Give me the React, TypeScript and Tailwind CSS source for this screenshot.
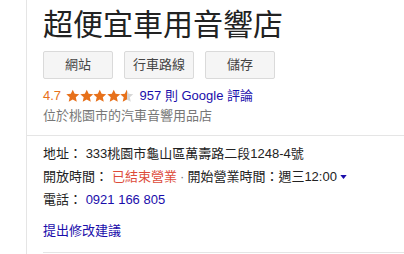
import React from "react";

const font = { fontFamily: '"Liberation Sans", Arial, "Noto Sans CJK TC", sans-serif' };

function Star({ fill }: { fill: "full" | "half" }) {
  return (
    <svg viewBox="0 0 24 24" className="h-[14px] w-[13.5px]">
      <defs>
        <linearGradient id="half">
          <stop offset="50%" stopColor="#e7711b" />
          <stop offset="50%" stopColor="#d6d6d6" />
        </linearGradient>
      </defs>
      <path
        d="M12 .8l3.4 7.4 8.1.8-6.1 5.4 1.8 8L12 18.3l-7.2 4.1 1.8-8L.5 9l8.1-.8z"
        fill={fill === "full" ? "#e7711b" : "url(#half)"}
      />
    </svg>
  );
}

export default function App() {
  const buttons = ["網站", "行車路線", "儲存"];

  return (
    <div className="h-[254px] w-[404px] overflow-hidden bg-white pl-[26px]" style={font}>
      <div className="h-full border-l border-[#e5e5e5]">
        <div className="pl-[16px]">
          <h1 className="pt-[7px] text-[30px] leading-[36px] text-[#222]">超便宜車用音響店</h1>

          <div className="mt-[8px] flex gap-[11px]">
            {buttons.map((b) => (
              <div
                key={b}
                className="flex h-[28px] w-[70px] items-center justify-center rounded-[2px] border border-[#dadada] bg-[#f5f5f5] text-[13px] text-[#444]"
              >
                {b}
              </div>
            ))}
          </div>

          <div className="mt-[8px] flex h-[18px] items-center text-[13px]">
            <span className="text-[#e7711b]">4.7</span>
            <span className="ml-[5px] flex">
              <Star fill="full" />
              <Star fill="full" />
              <Star fill="full" />
              <Star fill="full" />
              <Star fill="half" />
            </span>
            <span className="ml-[6px] text-[#1a0dab]">957 則 Google 評論</span>
          </div>

          <div className="mt-[2px] text-[13px] leading-[18px] text-[#777]">位於桃園市的汽車音響用品店</div>
        </div>

        <div className="mt-[10px] border-t border-[#e5e5e5] pl-[16px] pt-[6px] text-[13px] text-[#222]">
          <div className="leading-[23px]">
            地址： <span>333桃園市龜山區萬壽路二段1248-4號</span>
          </div>
          <div className="flex items-center leading-[23px]">
            <span>開放時間：</span>
            <span className="ml-[4px] text-[#dd4b39]">已結束營業</span>
            <span className="ml-[3px] text-[#777]">·</span>
            <span className="ml-[3px]">開始營業時間：週三12:00</span>
            <svg viewBox="0 0 8 5" className="ml-[3px] h-[4px] w-[7px]">
              <path d="M0 0h8L4 5z" fill="#1a0dab" />
            </svg>
          </div>
          <div className="leading-[23px]">
            電話： <span className="text-[#1a0dab]">0921 166 805</span>
          </div>
          <div className="mt-[8px] leading-[23px] text-[#1a0dab]">提出修改建議</div>
          <div className="mt-[10px] border-t border-[#e5e5e5]" />
        </div>
      </div>
    </div>
  );
}
